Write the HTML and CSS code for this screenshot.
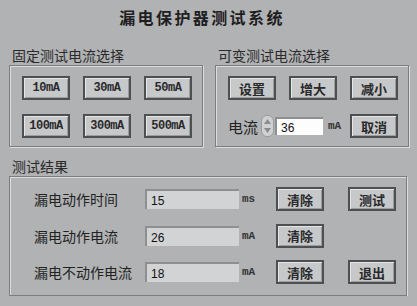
FILE: index.html
```html
<!DOCTYPE html>
<html lang="zh-CN">
<head>
    <meta charset="UTF-8">
    <title>漏电保护器测试系统</title>
    <link rel="stylesheet" href="styles.css">
</head>
<body>
    <div class="panel">
        <h1 class="title">漏电保护器测试系统</h1>

        <div class="top">
            <!-- fixed current -->
            <div>
                <div class="group-label">固定测试电流选择</div>
                <div class="group fixed">
                    <button class="btn mono">10mA</button>
                    <button class="btn mono">30mA</button>
                    <button class="btn mono">50mA</button>
                    <button class="btn mono">100mA</button>
                    <button class="btn mono">300mA</button>
                    <button class="btn mono">500mA</button>
                </div>
            </div>

            <!-- variable current -->
            <div>
                <div class="group-label">可变测试电流选择</div>
                <div class="group variable">
                    <button class="btn">设置</button>
                    <button class="btn">增大</button>
                    <button class="btn">减小</button>
                    <div class="current-row">
                        <span class="current-label">电流</span>
                        <span class="spinner">
                            <svg width="9" height="18" viewBox="0 0 9 18">
                                <path d="M4.5 2 L8 7 L1 7 Z" fill="#8a8b8d"/>
                                <path d="M4.5 16 L8 11 L1 11 Z" fill="#8a8b8d"/>
                            </svg>
                        </span>
                        <input class="field white" type="text" value="36">
                        <span class="unit">mA</span>
                    </div>
                    <button class="btn">取消</button>
                </div>
            </div>
        </div>

        <div class="group-label results-label">测试结果</div>
        <div class="group results">
            <span class="row-label">漏电动作时间</span>
            <input class="field" type="text" value="15">
            <span class="unit">ms</span>
            <button class="btn">清除</button>
            <span></span>
            <button class="btn">测试</button>

            <span class="row-label">漏电动作电流</span>
            <input class="field" type="text" value="26">
            <span class="unit">mA</span>
            <button class="btn">清除</button>
            <span></span>
            <span></span>

            <span class="row-label">漏电不动作电流</span>
            <input class="field" type="text" value="18">
            <span class="unit">mA</span>
            <button class="btn">清除</button>
            <span></span>
            <button class="btn">退出</button>
        </div>
    </div>
</body>
</html>
```

FILE: styles.css
```css
body {
    margin: 0;
    background: #b1b2b4;
    font-family: "Noto Sans CJK SC", "Noto Sans", sans-serif;
    color: #222;
}

.panel {
    width: 400px;
    padding: 0 8px 0 9px;
}

.title {
    margin: 0;
    height: 38px;
    padding-right: 14px;
    line-height: 34px;
    font-size: 16px;
    font-weight: bold;
    letter-spacing: 2.4px;
    text-align: center;
    color: #1e1e1e;
}

.top {
    display: grid;
    grid-template-columns: 194px 194px;
    column-gap: 12px;
}

.group-label {
    font-size: 14px;
    line-height: 19px;
    margin-top: 8px;
    padding-left: 3px;
    color: #2a2a2a;
}

.results-label {
    margin-top: 10px;
}

.group {
    border: 1px solid #7c7d7f;
    box-shadow: inset 1px 1px 0 #dcdcdc, 1px 1px 0 #dcdcdc;
}

.fixed, .variable {
    height: 82px;
    box-sizing: border-box;
    padding: 10px 0 0 12px;
    display: grid;
    grid-template-columns: 48px 48px 48px;
    grid-auto-rows: 24px;
    column-gap: 13px;
    row-gap: 14px;
}

.current-row {
    grid-column: 1 / 3;
    display: flex;
    align-items: center;
    white-space: nowrap;
}

.current-row > * {
    flex-shrink: 0;
}

.current-label {
    font-size: 15px;
    width: 33px;
}

.spinner {
    width: 13px;
    height: 22px;
    border-radius: 6px;
    background: #cfd0d2;
    border: 1px solid #9a9b9d;
    box-sizing: border-box;
    display: flex;
    align-items: center;
    justify-content: center;
}

.btn {
    width: 48px;
    height: 24px;
    padding: 0;
    background: #c7c8ca;
    border: 2px solid #4e4f51;
    box-shadow: inset 1px 1px 0 #e6e6e6, inset -1px -1px 0 #9c9d9f;
    font-family: "Noto Sans CJK SC", sans-serif;
    font-size: 13px;
    font-weight: bold;
    color: #2a2a2a;
}

.mono {
    font-family: "Liberation Mono", monospace;
    font-size: 12px;
    letter-spacing: -0.5px;
}

.field {
    width: 94px;
    height: 20px;
    box-sizing: border-box;
    padding: 2px 0 0 4px;
    border: none;
    border-top: 2px solid #8e8f91;
    border-left: 2px solid #8e8f91;
    background: #d2d3d5;
    font-family: "Liberation Sans", sans-serif;
    font-size: 12px;
    color: #111;
}

.field.white {
    width: 48px;
    height: 18px;
    margin-left: 1px;
    background: #fdfdfd;
}

.unit {
    font-family: "Liberation Mono", monospace;
    font-size: 11px;
    font-weight: bold;
    color: #333;
    padding-left: 3px;
}

.variable .unit {
    padding-left: 5px;
}

.results {
    width: 398px;
    box-sizing: border-box;
    height: 120px;
    padding: 10px 0 0 24px;
    display: grid;
    grid-template-columns: 111px 94px 37px 48px 24px 48px;
    grid-auto-rows: 24px;
    row-gap: 12.5px;
    align-items: center;
}

.row-label {
    font-size: 14px;
    color: #222;
}
```
